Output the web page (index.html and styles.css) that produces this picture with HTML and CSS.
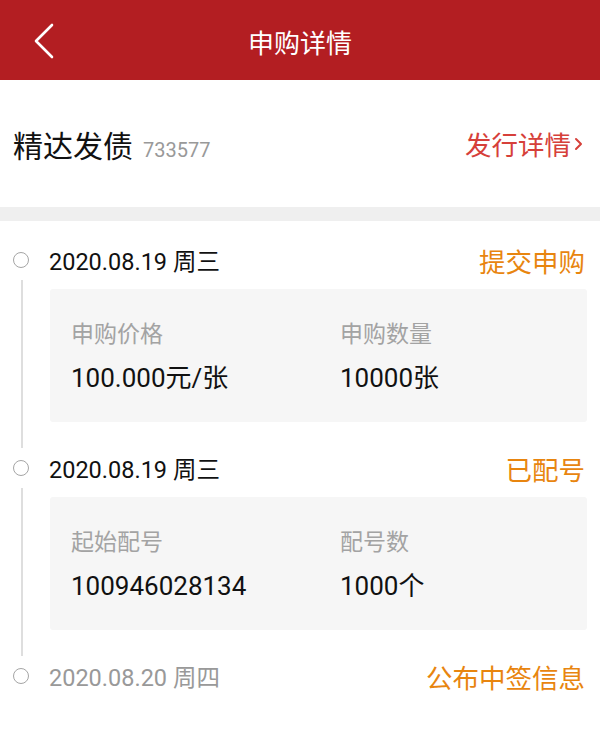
FILE: index.html
```html
<!DOCTYPE html>
<html lang="zh-CN">
<head>
    <meta charset="UTF-8">
    <meta name="viewport" content="width=device-width, initial-scale=1.0">
    <title>申购详情</title>
    <link rel="stylesheet" href="styles.css">
</head>
<body>
    <header class="topbar">
        <a class="back" href="#">
            <svg width="22" height="36" viewBox="0 0 22 36">
                <polyline points="19,2 3,18 19,34" fill="none" stroke="#fff" stroke-width="2.6" stroke-linecap="round" stroke-linejoin="round"/>
            </svg>
        </a>
        <h1>申购详情</h1>
    </header>

    <section class="bond">
        <div class="bond-name">精达发债<span class="bond-code">733577</span></div>
        <a class="bond-link" href="#">发行详情
            <svg width="14" height="20" viewBox="0 0 14 20">
                <polyline points="5,5 10,10 5,15" fill="none" stroke="#d6403a" stroke-width="2" stroke-linecap="round" stroke-linejoin="round"/>
            </svg>
        </a>
    </section>

    <div class="gap"></div>

    <div class="timeline">
        <div class="item">
            <div class="head">
                <span class="dot"></span>
                <span class="date">2020.08.19 周三</span>
                <span class="status">提交申购</span>
            </div>
            <div class="body">
                <div class="rail"></div>
                <div class="card">
                    <div class="field">
                        <div class="label">申购价格</div>
                        <div class="value">100.000元/张</div>
                    </div>
                    <div class="field">
                        <div class="label">申购数量</div>
                        <div class="value">10000张</div>
                    </div>
                </div>
            </div>
        </div>

        <div class="item">
            <div class="head">
                <span class="dot"></span>
                <span class="date">2020.08.19 周三</span>
                <span class="status">已配号</span>
            </div>
            <div class="body">
                <div class="rail"></div>
                <div class="card">
                    <div class="field">
                        <div class="label">起始配号</div>
                        <div class="value">100946028134</div>
                    </div>
                    <div class="field">
                        <div class="label">配号数</div>
                        <div class="value">1000个</div>
                    </div>
                </div>
            </div>
        </div>

        <div class="item">
            <div class="head">
                <span class="dot"></span>
                <span class="date date-pending">2020.08.20 周四</span>
                <span class="status">公布中签信息</span>
            </div>
        </div>
    </div>
</body>
</html>
```

FILE: styles.css
```css
body {
    margin: 0;
    background-color: #fff;
    font-family: Roboto, "Noto Sans CJK SC", sans-serif;
    color: #111;
}

.topbar {
    background-color: #b31e22;
    height: 80px;
    display: flex;
    align-items: center;
    justify-content: center;
    position: relative;
}

.topbar h1 {
    margin: 0;
    color: #fff;
    font-size: 26px;
    font-weight: normal;
    padding-top: 3px;
}

.back {
    position: absolute;
    left: 33px;
    top: 23px;
    display: block;
    height: 36px;
}

.bond {
    height: 127px;
    padding: 0 15px 0 13px;
    box-sizing: border-box;
    display: flex;
    align-items: center;
    justify-content: space-between;
}

.bond-name {
    font-size: 30px;
    color: #111;
}

.bond-code {
    font-size: 20px;
    color: #999;
    margin-left: 10px;
}

.bond-link {
    display: flex;
    align-items: center;
    color: #d6403a;
    font-size: 26.5px;
    text-decoration: none;
}

.bond-link svg {
    margin-left: 0;
}

.gap {
    height: 14px;
    background-color: #efefef;
}

.timeline {
    padding: 19px 15px 0 13px;
}

.head {
    height: 40px;
    display: flex;
    align-items: center;
}

.dot {
    width: 14px;
    height: 14px;
    border: 1.6px solid #a5a5a5;
    border-radius: 50%;
    margin-right: 20px;
    flex-shrink: 0;
}

.date {
    font-size: 23.5px;
    color: #111;
}

.date-pending {
    color: #999;
}

.status {
    margin-left: auto;
    font-size: 26.5px;
    color: #e8850f;
}

.body {
    display: flex;
}

.rail {
    width: 17px;
    margin-right: 20px;
    flex-shrink: 0;
    display: flex;
    justify-content: center;
}

.rail::before {
    content: "";
    width: 2px;
    background-color: #dedede;
}

.card {
    flex: 1;
    margin: 9px -2px 26px 0;
    height: 133px;
    box-sizing: border-box;
    background-color: #f6f6f6;
    border-radius: 3px;
    padding: 31px 0 0 21px;
    display: grid;
    grid-template-columns: 269px 1fr;
}

.label {
    font-size: 23px;
    line-height: 30px;
    color: #a3a3a3;
}

.value {
    font-size: 26px;
    line-height: 32px;
    margin-top: 12px;
    color: #111;
}
```
